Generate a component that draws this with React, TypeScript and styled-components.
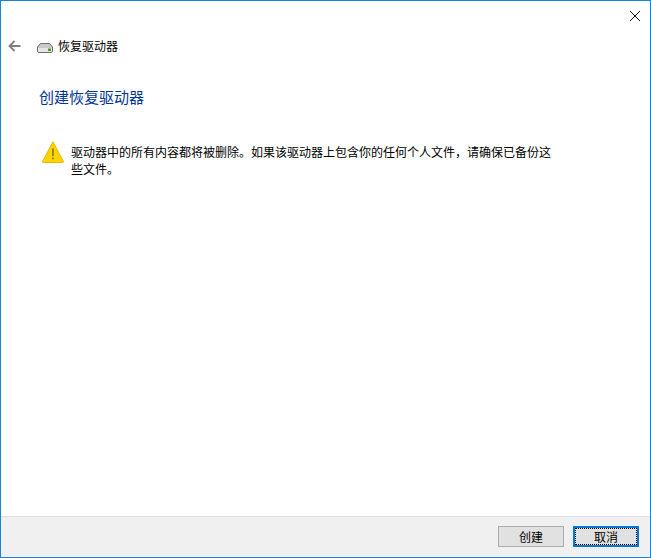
import React from 'react';
import styled, { createGlobalStyle } from 'styled-components';

const GlobalStyle = createGlobalStyle`
html, body {
  margin: 0;
  padding: 0;
  background: #fff;
}
`;

const Window = styled.div`
box-sizing: border-box;
width: 651px;
height: 558px;
display: flex;
flex-direction: column;
border: 1px solid #1883d7;
background: #fff;
font-family: "Noto Sans CJK SC", "Liberation Sans", sans-serif;
color: #000;
`;

const TitleBar = styled.div`
height: 29px;
display: flex;
justify-content: flex-end;
`;

const CloseButton = styled.div`
width: 30px;
height: 29px;
display: flex;
align-items: center;
justify-content: center;
`;

const NavRow = styled.div`
height: 32px;
display: flex;
align-items: center;
padding-left: 7px;
`;

const BackButton = styled.div`
width: 29px;
display: flex;
align-items: center;
`;

const DriveIcon = styled.svg`
margin-top: 3px;
`;

const NavTitle = styled.span`
margin-left: 5px;
font-size: 12px;
line-height: 16px;
`;

const Content = styled.div`
flex: 1;
padding: 25px 96px 0 38px;
`;

const Heading = styled.h1`
margin: 0;
font-size: 15px;
line-height: 20px;
font-weight: 400;
color: #003399;
`;

const WarningRow = styled.div`
display: flex;
align-items: flex-start;
margin-top: 33px;
padding-left: 3px;
`;

const WarningText = styled.p`
margin: 3px 0 0 7px;
font-size: 12px;
line-height: 17px;
`;

const Footer = styled.div`
box-sizing: border-box;
height: 41px;
display: flex;
justify-content: flex-end;
align-items: flex-start;
gap: 9px;
padding: 9px 11px 0 0;
background: #f0f0f0;
border-top: 1px solid #dfdfdf;
`;

const Button = styled.button<{ $focused?: boolean }>`
box-sizing: border-box;
width: 66px;
height: 21px;
padding: 0;
background: #e1e1e1;
border: ${p => (p.$focused ? '2px solid #0078d7' : '1px solid #adadad')};
outline: ${p => (p.$focused ? '1px dotted #000' : 'none')};
outline-offset: ${p => (p.$focused ? '-3px' : '0')};
font-family: inherit;
font-size: 12px;
line-height: 16px;
color: #000;
`;

export default function App() {
  return (
    <Window>
      <GlobalStyle />
      <TitleBar>
        <CloseButton>
          <svg width="10" height="10" viewBox="0 0 10 10">
            <path d="M0 0 L10 10 M10 0 L0 10" stroke="#111" strokeWidth="1" fill="none" />
          </svg>
        </CloseButton>
      </TitleBar>
      <NavRow>
        <BackButton>
          <svg width="13" height="12" viewBox="0 0 13 12">
            <path d="M12.5 6 H1.5 M6.5 1 L1.5 6 L6.5 11" stroke="#808080" strokeWidth="1.8" fill="none" />
          </svg>
        </BackButton>
        <DriveIcon width="16" height="10" viewBox="0 0 16 10">
          <path d="M3.5 .5 H12.5 L15.5 4 V8 Q15.5 9.5 14 9.5 H2 Q.5 9.5 .5 8 V4 Z" fill="#c8c8c8" stroke="#6f6f6f" />
          <path d="M1 5 H15 V8 Q15 9 14 9 H2 Q1 9 1 8 Z" fill="#e6e6e6" />
          <rect x="11" y="5.5" width="3" height="2.5" fill="#4c9a2a" />
        </DriveIcon>
        <NavTitle>恢复驱动器</NavTitle>
      </NavRow>
      <Content>
        <Heading>创建恢复驱动器</Heading>
        <WarningRow>
          <svg width="24" height="24" viewBox="0 0 24 24">
            <path d="M12 .8 L23.4 22.4 Q23.7 23.5 22.6 23.5 H1.4 Q.3 23.5 .6 22.4 Z" fill="#fdd400" stroke="#e0b400" />
            <rect x="11.5" y="8" width="1" height="8.5" fill="#333" />
            <rect x="11.5" y="18" width="1" height="2" fill="#333" />
          </svg>
          <WarningText>驱动器中的所有内容都将被删除。如果该驱动器上包含你的任何个人文件，请确保已备份这些文件。</WarningText>
        </WarningRow>
      </Content>
      <Footer>
        <Button>创建</Button>
        <Button $focused>取消</Button>
      </Footer>
    </Window>
  );
}
